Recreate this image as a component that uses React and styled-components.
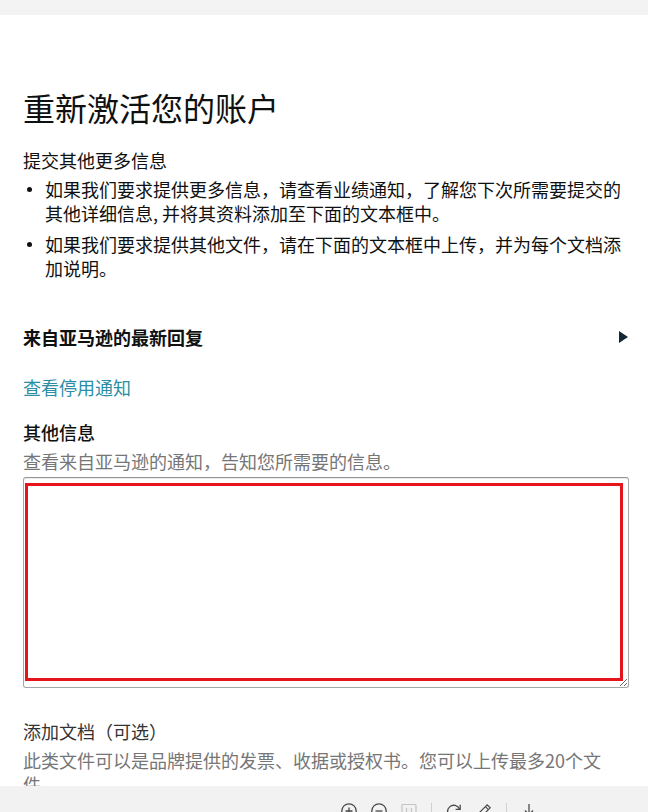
import React from 'react';
import styled, { createGlobalStyle } from 'styled-components';

const GlobalStyle = createGlobalStyle`
  html, body {
    margin: 0;
    padding: 0;
    background: #ffffff;
  }
  body {
    font-family: 'Noto Sans CJK SC', 'Noto Sans', 'Liberation Sans', sans-serif;
    color: #0f1111;
  }
`;

const Page = styled.div`
  height: 100vh;
  display: flex;
  flex-direction: column;
  overflow: hidden;
`;

const TopStrip = styled.div`
  height: 14px;
  flex-shrink: 0;
  background: #f3f3f3;
  border-bottom: 1px solid #f0f3f3;
`;

const Main = styled.main`
  flex: 1;
  overflow: hidden;
  padding: 0 19px 0 23px;
`;

const Title = styled.h1`
  margin: 72px 0 0;
  font-size: 32px;
  line-height: 40px;
  font-weight: 400;
  color: #0f1111;
`;

const SubHeading = styled.div`
  margin-top: ${p => p.$top}px;
  font-size: 18px;
  line-height: 24px;
  font-weight: ${p => p.$weight || 400};
  color: ${p => p.$color || '#0f1111'};
`;

const BulletList = styled.ul`
  list-style: none;
  margin: 5px 0 0;
  padding: 0;
  display: flex;
  flex-direction: column;
  gap: 7px;
`;

const BulletItem = styled.li`
  display: flex;
  font-size: 18px;
  line-height: 24px;
  color: #0f1111;

  &::before {
    content: '';
    flex-shrink: 0;
    width: 5px;
    height: 5px;
    border-radius: 50%;
    background: #0f1111;
    margin: 10px 13px 0 4px;
  }
`;

const ReplyRow = styled.div`
  margin-top: 45px;
  display: flex;
  align-items: center;
  justify-content: space-between;
  font-size: 18px;
  line-height: 24px;
  font-weight: 700;
  color: #0f1111;
`;

const Caret = styled.span`
  width: 0;
  height: 0;
  margin-right: 1px;
  border-top: 6px solid transparent;
  border-bottom: 6px solid transparent;
  border-left: 9px solid #0f2a33;
`;

const TextLink = styled.a`
  display: block;
  margin-top: 26px;
  font-size: 18px;
  line-height: 24px;
  color: #2a8ea6;
  text-decoration: none;
`;

const FieldHint = styled.div`
  margin-top: 5px;
  font-size: 18px;
  line-height: 24px;
  color: #767676;
`;

const TextAreaWrap = styled.div`
  position: relative;
  margin-top: 4px;
  height: 211px;
`;

const TextArea = styled.textarea`
  box-sizing: border-box;
  display: block;
  width: 100%;
  height: 100%;
  margin: 0;
  padding: 8px;
  border: 1px solid #a6a6a6;
  border-top-color: #949494;
  border-radius: 3px;
  box-shadow: 0 1px 0 rgba(255, 255, 255, 0.5), 0 1px 0 rgba(0, 0, 0, 0.07) inset;
  background: #ffffff;
  font-family: inherit;
  font-size: 16px;
  outline: none;
`;

const Annotation = styled.div`
  position: absolute;
  top: 6px;
  left: 2px;
  right: 6px;
  bottom: 7px;
  border: 3px solid #e5141d;
  pointer-events: none;
`;

const Description = styled.div`
  margin-top: 5px;
  font-size: 18px;
  line-height: 24px;
  color: #767676;
`;

const Toolbar = styled.div`
  height: 26px;
  flex-shrink: 0;
  background: #f2f2f2;
  display: flex;
  align-items: flex-start;
  gap: 14px;
  padding: 17px 0 0 341px;
  box-sizing: border-box;
  overflow: hidden;
`;

const ToolIcon = styled.svg`
  width: 16px;
  height: 16px;
  flex-shrink: 0;
  color: ${p => (p.$muted ? '#c4c4c4' : '#4a4a4a')};
`;

const ToolDivider = styled.span`
  width: 1px;
  height: 14px;
  background: #d0d0d0;
`;

const ZoomInIcon = () => (
  <ToolIcon viewBox="0 0 16 16" fill="none" stroke="currentColor" strokeWidth="1.3">
    <circle cx="8" cy="8" r="7.2" />
    <path d="M8 4.5v7M4.5 8h7" />
  </ToolIcon>
);

const ZoomOutIcon = () => (
  <ToolIcon viewBox="0 0 16 16" fill="none" stroke="currentColor" strokeWidth="1.3">
    <circle cx="8" cy="8" r="7.2" />
    <path d="M4.5 8h7" />
  </ToolIcon>
);

const ActualSizeIcon = () => (
  <ToolIcon $muted viewBox="0 0 16 16" fill="none" stroke="currentColor" strokeWidth="1.2">
    <rect x="1" y="1.5" width="14" height="13" rx="1" />
    <path d="M5.5 5v6M10.5 5v6M8 6.5v.5M8 9v.5" />
  </ToolIcon>
);

const RotateIcon = () => (
  <ToolIcon viewBox="0 0 16 16" fill="none" stroke="currentColor" strokeWidth="1.3">
    <path d="M13.6 6.2A6.2 6.2 0 1 0 14 9" />
    <path d="M14.2 1.8v4.6H9.6" />
  </ToolIcon>
);

const PencilIcon = () => (
  <ToolIcon viewBox="0 0 16 16" fill="none" stroke="currentColor" strokeWidth="1.2">
    <path d="M11.2 1.8l3 3L5.4 13.6 1.6 14.4l.8-3.8z" />
    <path d="M9.4 3.6l3 3" />
  </ToolIcon>
);

const DownloadIcon = () => (
  <ToolIcon viewBox="0 0 16 16" fill="none" stroke="currentColor" strokeWidth="1.3">
    <path d="M8 1v10M4 7.5l4 4 4-4M2 15h12" />
  </ToolIcon>
);

const App = () => {
  return (
    <Page>
      <GlobalStyle />
      <TopStrip />
      <Main>
        <Title>重新激活您的账户</Title>

        <SubHeading $top={21}>提交其他更多信息</SubHeading>
        <BulletList>
          <BulletItem>如果我们要求提供更多信息，请查看业绩通知，了解您下次所需要提交的其他详细信息, 并将其资料添加至下面的文本框中。</BulletItem>
          <BulletItem>如果我们要求提供其他文件，请在下面的文本框中上传，并为每个文档添加说明。</BulletItem>
        </BulletList>

        <ReplyRow>
          <span>来自亚马逊的最新回复</span>
          <Caret />
        </ReplyRow>

        <TextLink href="#">查看停用通知</TextLink>

        <SubHeading $top={21} $weight={500}>其他信息</SubHeading>
        <FieldHint>查看来自亚马逊的通知，告知您所需要的信息。</FieldHint>
        <TextAreaWrap>
          <TextArea />
          <Annotation />
        </TextAreaWrap>

        <SubHeading $top={31} $color="#333333">添加文档（可选）</SubHeading>
        <Description>此类文件可以是品牌提供的发票、收据或授权书。您可以上传最多20个文件。</Description>
      </Main>
      <Toolbar>
        <ZoomInIcon />
        <ZoomOutIcon />
        <ActualSizeIcon />
        <ToolDivider />
        <RotateIcon />
        <PencilIcon />
        <ToolDivider />
        <DownloadIcon />
      </Toolbar>
    </Page>
  );
};

export default App;
